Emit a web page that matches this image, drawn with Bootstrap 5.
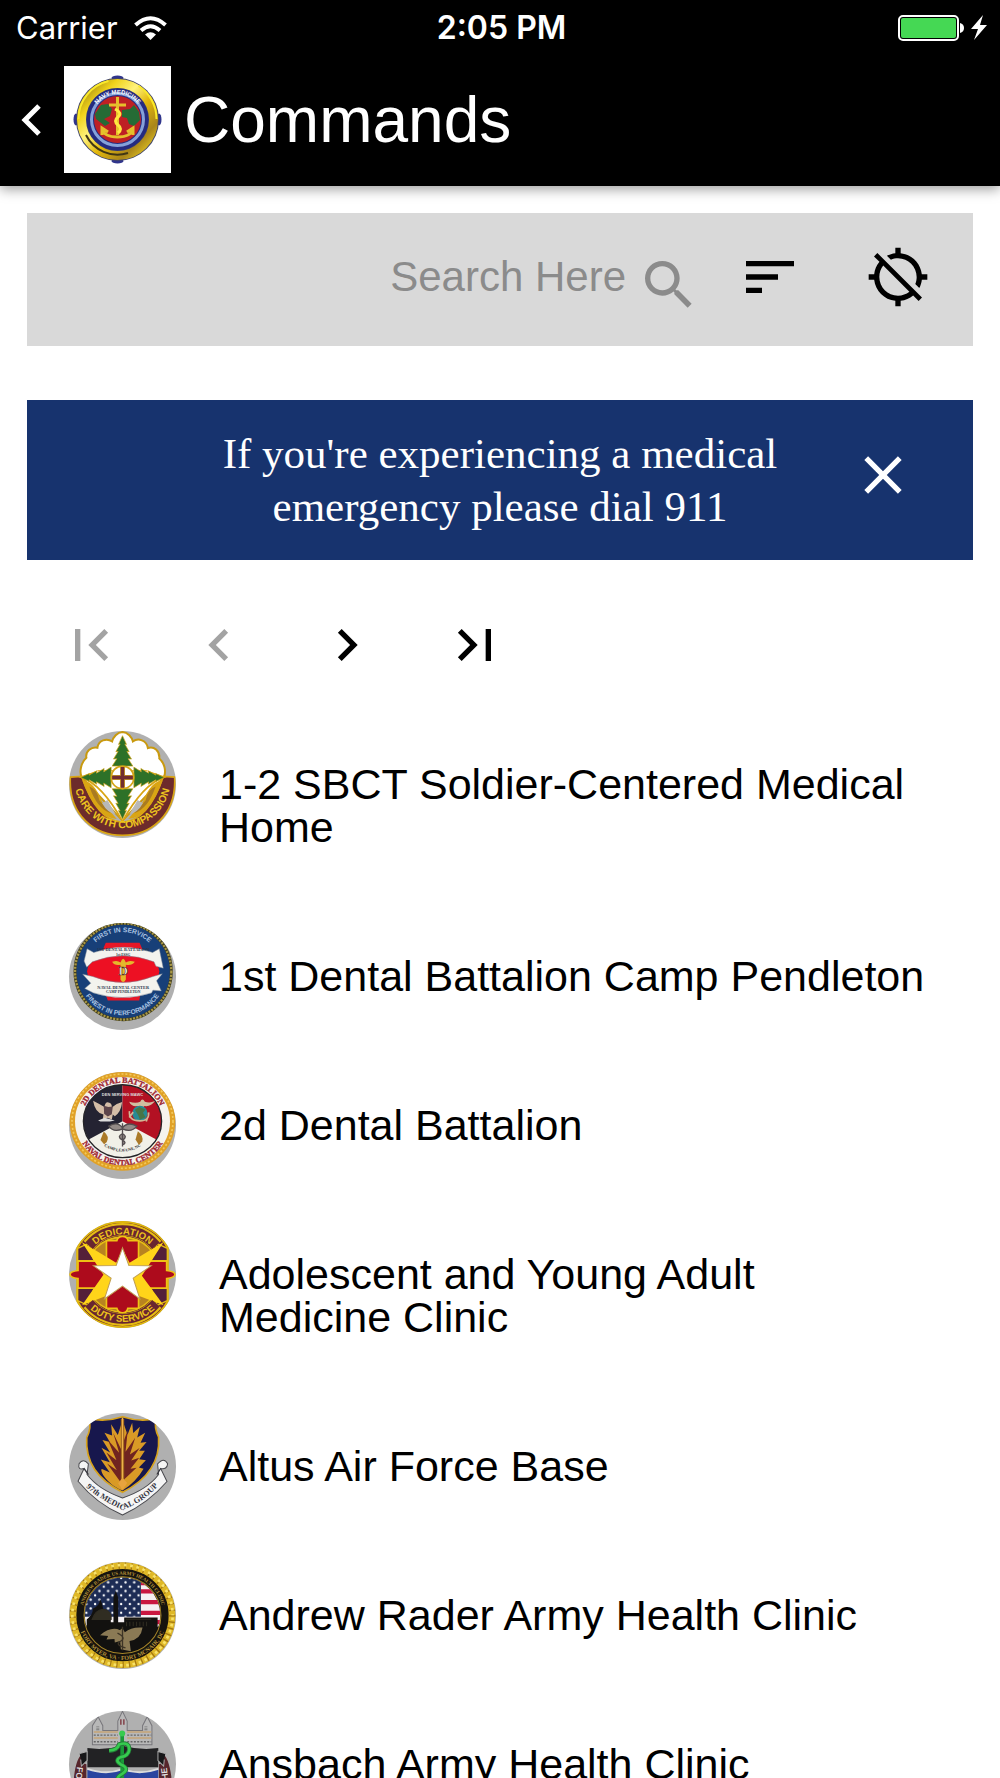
<!DOCTYPE html>
<html lang="en">
<head>
<meta charset="utf-8">
<meta name="viewport" content="width=device-width, initial-scale=1">
<title>Commands</title>
<link href="https://cdn.jsdelivr.net/npm/bootstrap@5.3.0/dist/css/bootstrap.min.css" rel="stylesheet">
<style>
body { font-family: "Liberation Sans", Arial, sans-serif; font-size: 43px; color: #000; background: #fff; }
svg { display: block; flex: none; }
.app-header { background: #000; color: #fff; box-shadow: 0 3px 12px rgba(0,0,0,.4); z-index: 2; }
.status-line { font-family: Inter, sans-serif; font-size: 31px; line-height: 40px; padding: 8px 13px 6px 16px; }
.status-time { font-size: 32px; font-weight: 600; }
.status-side { flex: 1 1 0; }
.title-line { padding: 12px 16px 13px; }
.title-line h1 { font-size: 64px; line-height: 72px; font-weight: 400; margin: 0 0 0 13px; }
.plain { background: none; border: 0; padding: 0; color: inherit; }
.scroll-area { overflow-y: auto; scrollbar-width: none; padding-top: 27px; }
.scroll-area::-webkit-scrollbar { display: none; }
.side-space { margin-left: 27px; margin-right: 27px; }
.search-bar { background: #d9d9d9; height: 133px; padding: 0 43px 5px; gap: 64px; margin-bottom: 54px; }
.search-field { color: #8b8b8b; margin-right: -27px; gap: 11px; }
.search-field input { font-size: 42px; line-height: 50px; text-align: right; outline: 0; min-width: 0; color: #000; }
.search-field input::placeholder { color: #8b8b8b; opacity: 1; }
.search-field label { padding-top: 16px; }
.notice { background: #17336e; color: #fff; font-family: "Liberation Serif", "Times New Roman", serif; line-height: 53px; padding: 27px 58px 27px 122px; margin-bottom: 21px; }
.notice p { flex: 1 1 0; margin: 0 auto; max-width: 640px; }
.pager button { padding: 32px; }
.pager button:disabled { color: #a3a3a3; }
.command-list { padding: 1px 64px 0 69px; }
.command-list a { display: flex; align-items: flex-start; gap: 43px; padding: 21px 0; color: #000; text-decoration: none; line-height: 43px; }
.command-list a > span { padding: 32px 0; }
.seal { width: 107px; height: 107px; border-radius: 50%; background: #b0b0b0; }
.seal text { font-family: "Liberation Sans", Arial, sans-serif; font-weight: 700; }
.seal text.roman { font-family: "Liberation Serif", serif; }
</style>
<script src="https://cdn.jsdelivr.net/npm/bootstrap@5.3.0/dist/js/bootstrap.bundle.min.js"></script>
</head>
<body>
<div class="d-flex flex-column vh-100 overflow-hidden">
<header class="app-header position-relative">
  <div class="status-line d-flex align-items-center">
    <div class="status-side d-flex align-items-center"><span>Carrier</span>
      <svg class="ms-3" width="33" height="24" viewBox="0 0 33 24" fill="none" stroke="#fff" stroke-width="4"><path d="M1.500 9Q16.500-4.500 31.500 9M7 14.500Q16.500 6 26 14.500"/><path d="M11 18.500Q16.500 14 22 18.500L16.500 24Z" fill="#fff" stroke="none"/></svg>
    </div>
    <span class="status-time">2:05 PM</span>
    <div class="status-side d-flex justify-content-end align-items-center">
      <svg width="90" height="28" viewBox="0 0 90 28"><rect x="2" y="2" width="59" height="24" rx="4" fill="none" stroke="#fff" stroke-width="2"/><rect x="4" y="4" width="55" height="20" rx="2" fill="#45d854"/><path d="M63 9q4 1 4 5t-4 5z" fill="#fff"/><path d="M86 1L74 15h7l-4 11 13-15h-7z" fill="#fff"/></svg>
    </div>
  </div>
  <div class="title-line d-flex align-items-center">
    <button class="plain me-3" aria-label="Back"><svg width="32" height="32" viewBox="0 0 32 32" fill="none" stroke="#fff" stroke-width="5"><path d="M23 2L9 16l14 14"/></svg></button>
    <svg width="107" height="107" viewBox="0 0 107 107" role="img" aria-label="Navy Medicine seal">
      <defs><linearGradient id="gold" x1="0" y1="0" x2="1" y2="1"><stop offset="0" stop-color="#8c7410"/><stop offset=".22" stop-color="#f0d21a"/><stop offset=".4" stop-color="#fff27a"/><stop offset=".58" stop-color="#e3b80c"/><stop offset=".8" stop-color="#a9851a"/><stop offset="1" stop-color="#f8de26"/></linearGradient>
      <path id="nm" d="M28 53.500a25.500 25.500 0 0 1 51 0"/></defs>
      <path fill="#fff" d="M0 0h107v107H0z"/>
      <g fill="#30358c"><ellipse cx="53.500" cy="12" rx="6" ry="2.500"/><ellipse cx="53.500" cy="95" rx="6" ry="2.500"/><ellipse cx="12" cy="53.500" rx="2.500" ry="6"/><ellipse cx="95" cy="53.500" rx="2.500" ry="6"/></g>
      <circle cx="53.500" cy="53.500" r="41.500" fill="#41456a"/><circle cx="53.500" cy="53.500" r="36" fill="none" stroke="url(#gold)" stroke-width="9"/>
      <path d="M14.500 53a39 39 0 0 1 30-38M92.500 53a39 39 0 0 0-18-33" fill="none" stroke="#fae92b" stroke-width="2"/>
      <path d="M22 69a35 35 0 0 0 42 18" fill="none" stroke="#403614" stroke-width="2"/>
      <circle cx="53.500" cy="53.500" r="31" fill="#252b80"/>
      <circle cx="53.500" cy="53.500" r="26" fill="none" stroke="#85a1d9" stroke-width="3"/>
      <text font-size="6" fill="#fff" font-weight="700" text-anchor="middle"><textPath href="#nm" startOffset="50%">NAVY MEDICINE</textPath></text>
      <circle cx="53.500" cy="53.500" r="23.500" fill="#be2024"/>
      <path d="M31 48l6-9 7-1 4 5-2 7-6 3 6 4-5 3-9-7zM58 44l8-1 4-4 5 7 1 8-6 6-5-2-2-6-5-1z" fill="#256b35"/>
      <path d="M53.500 31v38M45 39h17M38 63q2 8 15.500 8t15.500-8M38 69v-7l6 4M69 69v-7l-6 4" fill="none" stroke="#e6c02b" stroke-width="3"/>
      <path d="M51 43q8 4 3 8t0 8 0 8" fill="none" stroke="#ffe840" stroke-width="3"/>
    </svg>
    <h1>Commands</h1>
  </div>
</header>

<main class="scroll-area flex-fill">
  <form class="search-bar side-space d-flex align-items-center" onsubmit="return false">
    <div class="search-field d-flex align-items-center flex-fill">
      <input id="q" class="plain flex-fill" type="text" placeholder="Search Here">
      <label for="q" aria-label="Search"><svg width="64" height="64" viewBox="0 0 24 24" fill="currentColor"><path d="M15.500 14h-.79l-.28-.27A6.470 6.470 0 0 0 16 9.500 6.500 6.500 0 1 0 9.500 16c1.610 0 3.090-.59 4.230-1.570l.27.28v.79l5 4.990L20.490 19l-4.990-5zm-6 0C7.010 14 5 11.990 5 9.500S7.010 5 9.500 5 14 7.010 14 9.500 11.990 14 9.500 14z"/></svg></label>
    </div>
    <button type="button" class="plain" aria-label="Sort"><svg width="64" height="64" viewBox="0 0 24 24"><path d="M3 18h6v-2H3v2zM3 6v2h18V6H3zm0 7h12v-2H3v2z"/></svg></button>
    <button type="button" class="plain" aria-label="Location off"><svg width="64" height="64" viewBox="0 0 24 24"><path d="M20.940 11c-.46-4.170-3.770-7.480-7.940-7.940V1h-2v2.060c-1.130.12-2.190.46-3.160.97l1.500 1.500C10.160 5.190 11.060 5 12 5c3.870 0 7 3.130 7 7 0 .94-.19 1.840-.52 2.650l1.500 1.500c.5-.96.84-2.020.97-3.150H23v-2h-2.060zM3 4.270l2.040 2.040C3.970 7.620 3.250 9.230 3.060 11H1v2h2.060c.46 4.170 3.770 7.480 7.940 7.940V23h2v-2.060c1.770-.2 3.380-.91 4.690-1.980L19.730 21 21 19.730 4.270 3 3 4.270zm13.270 13.270C15.090 18.450 13.610 19 12 19c-3.870 0-7-3.130-7-7 0-1.610.55-3.090 1.460-4.270l9.810 9.810z"/></svg></button>
  </form>

  <div class="notice side-space d-flex align-items-start text-center" role="alert">
    <p>If you're experiencing a medical<br>emergency please dial 911</p>
    <button class="plain mt-3" aria-label="Close"><svg width="64" height="64" viewBox="0 0 24 24" fill="currentColor"><path d="M19 6.410L17.590 5 12 10.590 6.410 5 5 6.410 10.590 12 5 17.590 6.410 19 12 13.410 17.590 19 19 17.590 13.410 12z"/></svg></button>
  </div>

  <nav class="pager side-space d-flex" aria-label="Pages">
    <button class="plain" disabled aria-label="First page"><svg width="64" height="64" viewBox="0 0 24 24" fill="currentColor"><path d="M18.410 16.590L13.820 12l4.590-4.590L17 6l-6 6 6 6zM6 6h2v12H6z"/></svg></button>
    <button class="plain" disabled aria-label="Previous page"><svg width="64" height="64" viewBox="0 0 24 24" fill="currentColor"><path d="M15.410 7.410L14 6l-6 6 6 6 1.410-1.410L10.830 12z"/></svg></button>
    <button class="plain" aria-label="Next page"><svg width="64" height="64" viewBox="0 0 24 24" fill="currentColor"><path d="M10 6L8.590 7.410 13.170 12l-4.580 4.590L10 18l6-6z"/></svg></button>
    <button class="plain" aria-label="Last page"><svg width="64" height="64" viewBox="0 0 24 24" fill="currentColor"><path d="M5.590 7.410L10.180 12l-4.590 4.590L7 18l6-6-6-6zM16 6h2v12h-2z"/></svg></button>
  </nav>

  <ul class="command-list list-unstyled mb-0">
    <li><a href="#">
      <svg class="seal" viewBox="58 30 320 320" aria-hidden="true">
        <defs><path id="a1" d="M75 190A144 148 0 0 0 361 190"/></defs>
        <path d="M218 33C202 34 190 48 187 61 170 50 146 58 143 80 126 76 106 90 110 110 94 124 88 152 96 168L218 298 342 168C350 148 342 124 328 112 330 90 312 74 294 81 290 57 265 50 249 61 246 48 234 34 218 33Z" fill="#fff" stroke="#c99a10" stroke-width="6"/>
        <path d="M62 168C50 400 386 400 374 168L340 166Q296 298 218 303 140 298 96 166Z" fill="#6d2b2b" stroke="#d9a514" stroke-width="5"/>
        <path d="M98 178Q134 180 157 242L201 293Q140 290 98 178ZM338 178Q302 180 279 242L235 293Q296 290 338 178Z" fill="#d9a514"/>
        <path d="M119 196q24 8 30 42l34 38q-42-14-64-80zM317 196q-24 8-30 42l-34 38q42-14 64-80z" fill="#a97b22"/>
        <path d="M94 168Q157 190 218 300 279 190 342 168L290 150H146Z" fill="#fff" stroke="#d9a514" stroke-width="5"/>
        <path d="M157 246l16-10 24 42q-24-3-40-32zM279 246l-16-10-24 42q24-3 40-32z" fill="#b8b8b8"/>
        <path d="M140 150h156v24H140z" fill="#fff"/>
        <g fill="#2d7128" stroke="#d4a516" stroke-width="2"><path id="fir" d="M218 44l12 26-5-1 13 23-7-1 14 23-10-1 14 22h-22v31h-18v-31h-22l14-22-10 1 14-23-7 1 13-23-5 1z"/><use href="#fir" transform="rotate(90 218 169)"/><use href="#fir" transform="rotate(180 218 169)"/><use href="#fir" transform="rotate(270 218 169)"/></g>
        <circle cx="218" cy="169" r="34" fill="#fff" stroke="#d4a516" stroke-width="5"/><path d="M218 138v62M187 169h62" stroke="#cb9c25" stroke-width="15"/><path d="M218 138v62M187 169h62" stroke="#712d31" stroke-width="10"/>
        <text font-size="31" fill="#edc51f" text-anchor="middle"><textPath href="#a1" startOffset="50%">CARE WITH COMPASSION</textPath></text>
      </svg><span>1-2 SBCT Soldier-Centered Medical Home</span></a></li>
    <li><a href="#">
      <svg class="seal" viewBox="58 37 320 320" aria-hidden="true">
        <defs><path id="b1" d="M101 181a117 117 0 0 1 234 0"/><path id="b2" d="M86 181a132 132 0 0 0 264 0"/></defs>
        <circle cx="220" cy="182" r="144" fill="#173f78" stroke="#403e22" stroke-width="9"/><circle cx="220" cy="182" r="144" fill="none" stroke="#a99846" stroke-width="7" stroke-dasharray="6 4"/>
        <g fill="#a9c3e2" font-size="20" text-anchor="middle"><text><textPath href="#b1" startOffset="50%">FIRST IN SERVICE</textPath></text><text><textPath href="#b2" startOffset="50%">FINEST IN PERFORMANCE</textPath></text></g>
        <path d="M168 96h101l12 28-12 24H168l-12-24zM160 230h116l-8 39H174z" fill="#e81727"/>
        <ellipse cx="220" cy="181" rx="108" ry="60" fill="#ed1023"/>
        <g fill="#f3f3ee" stroke="#788595" stroke-width="1.500"><path d="M112 114l20 11q88-31 176 0l20-11 12 58-22-6-6-13q-92-36-184 0l-17 16-8-18z"/><path d="M99 190l30 7q90 36 180 0l28-8-17 21 14 30-25-2-4 8q-87 28-174 0l-26-13 18-16z"/></g>
        <g fill="#29364a" text-anchor="middle"><text class="roman" x="220" y="121" font-size="13">1ST DENTAL BATTALION</text><text class="roman" x="220" y="136" font-size="11">1st FSSG</text><text class="roman" x="220" y="233" font-size="13">NAVAL DENTAL CENTER</text><text class="roman" x="220" y="247" font-size="11">CAMP PENDLETON</text></g>
        <path d="M187 153q15-6 25 2 8-22 16 0 10-8 27-2-10 13-27 9v44q-8 15-16 0v-44q-18 4-25-9z" fill="#e4b82b"/><text class="roman" x="220" y="193" font-size="39" text-anchor="middle" fill="#fff" stroke="#56311c" stroke-width="2">D</text>
      </svg><span>1st Dental Battalion Camp Pendleton</span></a></li>
    <li><a href="#">
      <svg class="seal" viewBox="58 36 320 320" aria-hidden="true">
        <defs><path id="c1" d="M96 183a122 115 0 0 1 244 0"/><path id="c2" d="M79 183a139 132 0 0 0 278 0"/><path id="c3" d="M127 190a91 84 0 0 0 182 0"/></defs>
        <ellipse cx="218" cy="183" rx="150" ry="140" fill="#f5f3ed" stroke="#e0a127" stroke-width="16"/><ellipse cx="218" cy="183" rx="151" ry="141" fill="none" stroke="#f3c95b" stroke-width="5" stroke-dasharray="6 6"/>
        <ellipse cx="218" cy="183" rx="117" ry="109" fill="#f1f0e8"/><path d="M218 183V74A117 109 0 0 0 117 238Z" fill="#242332"/><path d="M218 183V74A117 109 0 0 1 319 238Z" fill="#b31123"/><ellipse cx="218" cy="183" rx="117" ry="109" fill="none" stroke="#252428" stroke-width="4"/>
        <g fill="#9f2631" stroke="#9f2631" text-anchor="middle" font-size="24"><text class="roman"><textPath href="#c1" startOffset="50%">2D DENTAL BATTALION</textPath></text><text class="roman"><textPath href="#c2" startOffset="50%">NAVAL DENTAL CENTER</textPath></text></g>
        <path d="M130 122q20 10 34 19 2-16 12-14 11 2 10 15 14-12 31-16-4 32-22 42l-6-5-3 15-13-5-14 5 2-15q-25-4-31-41z" fill="#d4bda7"/><path d="M162 137l14 4 13-2-3 23-12 7-11-8z" fill="#5d454b"/><path d="M145 181l20-8 30 8-15 3h-28" fill="#ddd"/>
        <path d="M238 125q20 6 33 0 6-13 14 0 15 5 30-2-12 18-31 15l-10 7-12-7q-18 2-24-13z" fill="#d1bd9f"/><circle cx="270" cy="160" r="23" fill="#278a94"/><path d="M255 149l13-8 19 7-8 10 8 13-17 8-5-14z" fill="#487546"/><path d="M239 153q-4 29 31 29 29 0 26-25M238 172l12-16M293 172l-4 12" fill="none" stroke="#d1b694" stroke-width="5"/>
        <path d="M218 189v70M218 203q-15-21-41-5 14 20 41 8 27 12 43-8-28-15-43 5M218 220q-19 10 0 20 15 8 0 14M218 220q17 10 0 20" fill="#948b87" stroke="#544e50" stroke-width="4"/>
        <g fill="#aa7927"><path d="M162 214q18 15 9 31l-8 7-11-13z"/><path d="M264 213q18 14 13 31l-10 10-10-16z"/></g>
        <g fill="#202126" text-anchor="middle" font-size="12"><text class="roman"><textPath href="#c3" startOffset="50%">CAMP LEJEUNE, NC</textPath></text></g><text x="218" y="108" text-anchor="middle" font-size="12" fill="#ddd">DEN SERVING MAWC</text>
      </svg><span>2d Dental Battalion</span></a></li>
    <li><a href="#">
      <svg class="seal" viewBox="58 32 320 320" aria-hidden="true">
        <defs><path id="d1" d="M98 192a120 120 0 0 1 240 0"/><path id="d2" d="M76 192a142 142 0 0 0 284 0"/></defs>
        <path d="M218 34C282 35 334 69 353 112V272C330 322 274 349 218 350 160 349 106 322 83 272V112C102 69 156 35 218 34Z" fill="#682630" stroke="#dfb60b" stroke-width="7"/>
        <circle cx="218" cy="192" r="112" fill="#b88320" stroke="#e6bd13" stroke-width="5"/>
        <path d="M84 114l30-14 19 51H84zM352 114l-30-14-19 51h49zM84 270l30 14 19-51H84zM352 270l-30 14-19-51h49z" fill="#542039" stroke="#e6bd13" stroke-width="4"/>
        <path d="M170 91h31q3-13 17-13t17 13h31v61h84v28q25 3 25 12t-25 12v29h-84v60h-32q-3 14-16 14t-17-14h-31v-60H85v-29q-24-3-24-12t24-12v-28h85z" fill="#ad0b1c" stroke="#efc214" stroke-width="5"/>
        <path d="M96 95l103 62 20-40 20 40 102-62-65 101 65 88-85-32-37-31-39 31-83 32 64-91z" fill="#ffd51a"/>
        <path d="M116 104A134 134 0 0 1 320 104M116 280A134 134 0 0 0 320 280" fill="none" stroke="#e6bd13" stroke-width="38"/><path d="M118 106A131 131 0 0 1 318 106M118 278A131 131 0 0 0 318 278" fill="none" stroke="#682630" stroke-width="30"/>
        <path d="M218 112l19 53 67 1-54 37 20 62-52-38-54 38 20-62-53-37 68-1z" fill="#fff" stroke="#bf9d51" stroke-width="3"/>
        <g fill="#edc31b" text-anchor="middle" font-size="29"><text><textPath href="#d1" startOffset="50%">DEDICATION</textPath></text><text><textPath href="#d2" startOffset="50%">DUTY SERVICE</textPath></text></g>
      </svg><span>Adolescent and Young Adult Medicine Clinic</span></a></li>
    <li><a href="#">
      <svg class="seal" viewBox="58 38 320 320" aria-hidden="true">
        <defs><path id="e1" d="M103 254Q145 294 218 328 286 302 330 250"/></defs>
        <path d="M118 55Q168 66 218 49 268 66 318 55 312 82 326 110 333 217 218 275 104 218 111 112 126 82 118 55Z" fill="#17174d" stroke="#d7a21c" stroke-width="5"/>
        <path d="M218 270C160 246 145 196 160 207L180 216 153 177 180 185 155 142 181 156 158 119 180 125 164 97 187 105 184 72 204 104 218 60 233 103 247 67 250 98 270 79 262 111 286 97 272 127 290 125 268 151 285 151 268 176 288 179 267 201 281 205Q259 244 218 270Z" fill="#d99a26"/>
        <path d="M213 246l-41-57 29 20-31-53 30 23-26-61 34 39-18-60 23 48 21-57-7 66 29-42-16 50 29-19-25 37 24-8-26 33 18-3z" fill="#702420"/><path d="M218 55v204" stroke="#9b621c" stroke-width="10"/><path d="M218 52v207" stroke="#efb24b" stroke-width="4"/><path d="M218 232l14 15-14 21-13-20z" fill="#e7a33e"/>
        <path d="M116 190q-16-19-28 0-4 20 15 14l-18 38q56 68 133 101 77-35 133-100l-19-39q19 4 21-14-11-22-30 0l3 32q-35 46-108 70-72-25-106-70z" fill="#f5f5f5" stroke="#48484d" stroke-width="3"/><path d="M103 204l13 18M332 204l-11 18" stroke="#38383f" stroke-width="4"/>
        <g fill="#34343e" font-size="24" text-anchor="middle"><text class="roman"><textPath href="#e1" startOffset="50%">97th MEDICAL GROUP</textPath></text></g>
      </svg><span>Altus Air Force Base</span></a></li>
    <li><a href="#">
      <svg class="seal" viewBox="58 36 320 320" aria-hidden="true">
        <defs><path id="f1" d="M97 195a121 121 0 0 1 242 0"/><path id="f2" d="M84 195a134 134 0 0 0 268 0"/><clipPath id="f3"><circle cx="218" cy="195" r="113"/></clipPath><pattern id="stars" width="26" height="26" patternUnits="userSpaceOnUse"><circle cx="6" cy="6" r="3.500" fill="#fff"/><circle cx="19" cy="19" r="3.500" fill="#fff"/></pattern></defs>
        <circle cx="218" cy="195" r="148" fill="#17140e" stroke="#dfb827" stroke-width="20"/><circle cx="218" cy="195" r="148" fill="none" stroke="#a67a12" stroke-width="20" stroke-dasharray="4 15"/><circle cx="218" cy="195" r="150" fill="none" stroke="#f8e26b" stroke-width="8" stroke-dasharray="8 11" stroke-dashoffset="-7"/>
        <g clip-path="url(#f3)"><path fill="#f5f0f2" d="M90 70h260v160H90z"/><path d="M273 99h80M273 124h80M273 156h80M273 188h80M273 216h80" stroke="#c91740" stroke-width="13"/><path fill="#1d2c55" d="M90 70h183v130H90z"/><path fill="url(#stars)" d="M90 70h183v130H90z"/>
        <path d="M90 226h21v-18q20-16 18-32 22-10 21-29 6 7 10 29 20 7 23 26v14h8V142l7-20 7 20v74h18v-14h100v30h30v90H90z" fill="#12110f"/><path d="M127 208h57v-13q-7-17-25-18-22 2-32 31zM228 207h76M230 215v13m10-13v13m10-13v13m10-13v13m10-13v13m10-13v13m10-13v13" fill="#302d22" stroke="#302d22" stroke-width="3"/></g>
        <path d="M211 240q-27-13-60 15l24 2-5 11 24-2 1 11 16-5 2 25 30 6-4-31q34-4 39-40-33-3-53 14-8-17-14-6z" fill="#8b7a55"/><path d="M218 230v70M203 249q28 14 9 24t15 20" fill="none" stroke="#3d3426" stroke-width="4"/>
        <circle cx="218" cy="195" r="115" fill="none" stroke="#a48429" stroke-width="3"/><g fill="#b6923a" text-anchor="middle"><text class="roman" font-size="15"><textPath href="#f1" startOffset="50%">ANDREW RADER US ARMY HEALTH CLINIC</textPath></text><text class="roman" font-size="18"><textPath href="#f2" startOffset="50%">FORT MYER, VA · FORT MCNAIR, DC</textPath></text></g>
      </svg><span>Andrew Rader Army Health Clinic</span></a></li>
    <li><a href="#">
      <svg class="seal" viewBox="58 63 320 320" aria-hidden="true">
        <path d="M128 164v-57l17-27 14 27v14h45V93l14-29 14 29v28h46v-14l14-27 14 27v57z" fill="#b8b8b8" stroke="#77767b" stroke-width="3"/><path d="M132 126h72M232 126h72M132 144h72M232 144h72" stroke="#c2a986" stroke-width="6"/><path d="M132 135h72M232 135h72M132 155h72M232 155h72" stroke="#666" stroke-width="4" stroke-dasharray="6 4"/><path d="M144 109v13m144-13v13" stroke="#777" stroke-width="9" stroke-dasharray="2 2"/><path d="M213 88v16m9-16v16" stroke="#874d54" stroke-width="5"/>
        <path d="M113 174q52 7 105-7 53 14 107 7v57H113z" fill="#222224"/><path d="M113 237q57 20 105 1 52 19 107-1v120H113z" fill="#2944a0"/><path d="M113 236q57 20 105 1 52 19 107-1" fill="none" stroke="#ddd" stroke-width="6"/>
        <path d="M101 189q-21 10-28 70v62h37V222q-20-6-9-33zM336 189q20 10 28 70v62h-37V222q20-6 9-33z" fill="#57262c"/><path d="M90 190l22-6v27l-17 17-2-20M346 190l-22-6v27l17 17 2-20" fill="#171719" stroke="#aaa" stroke-width="3"/>
        <text transform="translate(104 232) rotate(96)" x="0" y="22" font-size="26" fill="#ddd">FOR</text><text transform="translate(333 270) rotate(-96)" x="0" y="22" font-size="26" fill="#ddd">HE</text>
        <path d="M217 131v220" stroke="#189b38" stroke-width="11"/><path d="M178 182q25-1 30-19 31-10 30 16-2 18-25 22-20 9-1 21 30 13 5 29-29 16 2 33" fill="none" stroke="#237b37" stroke-width="13"/><path d="M178 181q25-1 30-18 31-10 30 16-2 18-25 22-20 9-1 21 30 13 5 29-29 16 2 33" fill="none" stroke="#36cb4f" stroke-width="8"/><circle cx="217" cy="130" r="9" fill="#36cb4f"/>
      </svg><span>Ansbach Army Health Clinic</span></a></li>
  </ul>
</main>
</div>
</body>
</html>
